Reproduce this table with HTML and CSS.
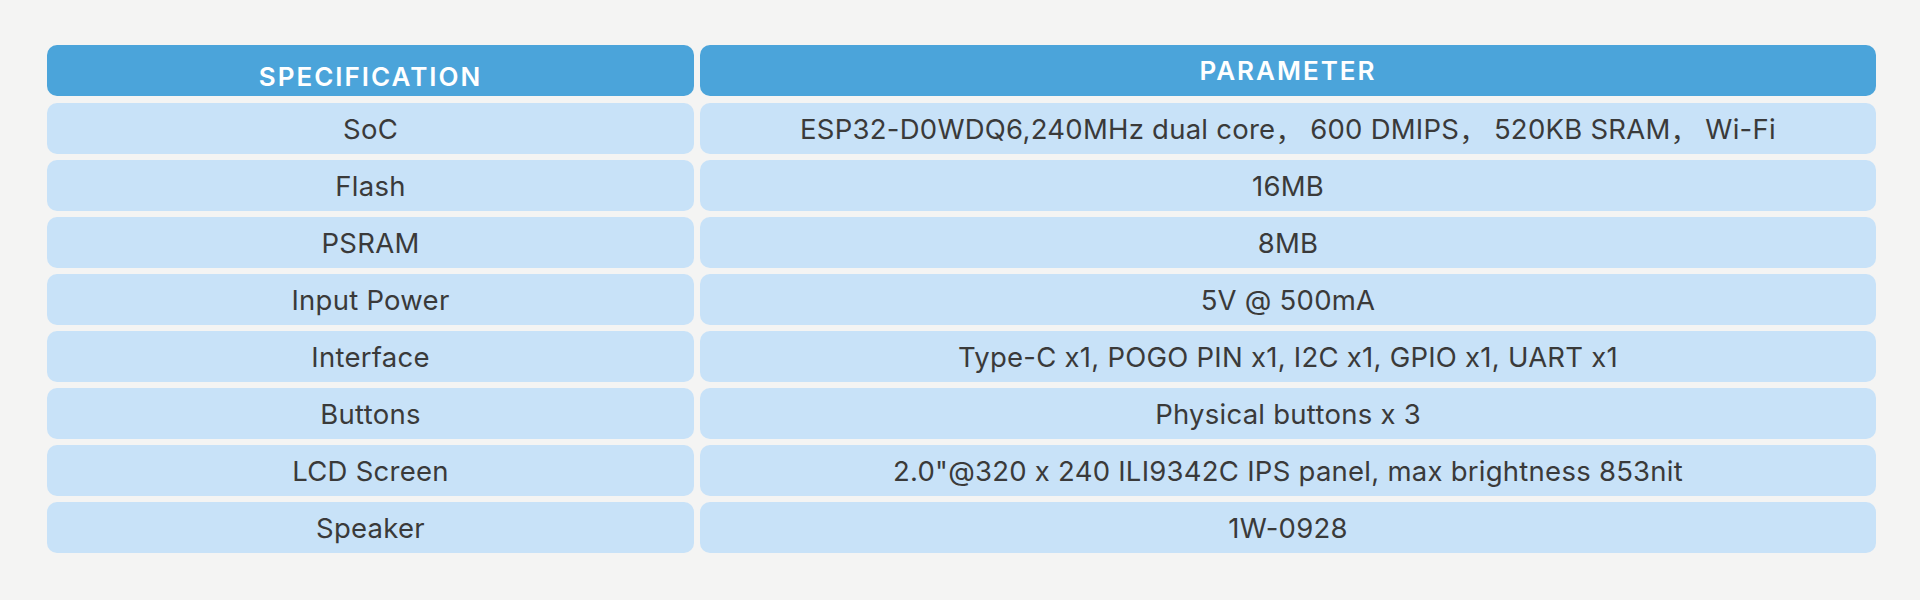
FILE: index.html
```html
<!DOCTYPE html>
<html lang="en">
<head>
<meta charset="utf-8">
<title>Specifications</title>
<link rel="stylesheet" href="styles.css">
</head>
<body>
<div class="page">
  <div class="spec-table">
    <div class="cell head head-spec">SPECIFICATION</div>
    <div class="cell head">PARAMETER</div>

    <div class="cell">SoC</div>
    <div class="cell">ESP32-D0WDQ6,240MHz dual core<span class="fw">，</span>600 DMIPS<span class="fw">，</span>520KB SRAM<span class="fw">，</span>Wi-Fi</div>

    <div class="cell">Flash</div>
    <div class="cell">16MB</div>

    <div class="cell">PSRAM</div>
    <div class="cell">8MB</div>

    <div class="cell">Input Power</div>
    <div class="cell">5V @ 500mA</div>

    <div class="cell">Interface</div>
    <div class="cell">Type-C x1, POGO PIN x1, I2C x1, GPIO x1, UART x1</div>

    <div class="cell">Buttons</div>
    <div class="cell">Physical buttons x 3</div>

    <div class="cell">LCD Screen</div>
    <div class="cell">2.0"@320 x 240 ILI9342C IPS panel, max brightness 853nit</div>

    <div class="cell">Speaker</div>
    <div class="cell">1W-0928</div>
  </div>
</div>
</body>
</html>
```
FILE: styles.css
```css
html, body {
  margin: 0;
  padding: 0;
}

body {
  width: 1920px;
  height: 600px;
  overflow: hidden;
  background: #f4f4f3;
  font-family: "Inter", "Noto Sans CJK SC", sans-serif;
  font-feature-settings: "calt" 0;
  color: #3a3a3a;
}

.page {
  padding: 45px 44px 0 47px;
}

.spec-table {
  display: grid;
  grid-template-columns: 647px 1fr;
  grid-template-rows: 52px repeat(8, 51px);
  column-gap: 6px;
  row-gap: 6px;
}

.cell {
  display: flex;
  align-items: center;
  justify-content: center;
  height: 51px;
  box-sizing: border-box;
  border-radius: 10px;
  background: #c8e2f8;
  font-size: 27.5px;
  letter-spacing: 0.25px;
  white-space: pre;
}

.fw {
  margin-right: 7px;
}

.head {
  background: #4ba4da;
  color: #ffffff;
  font-weight: 600;
  font-size: 26px;
  letter-spacing: 2px;
}

.head-spec {
  padding-top: 12px;
}
```
